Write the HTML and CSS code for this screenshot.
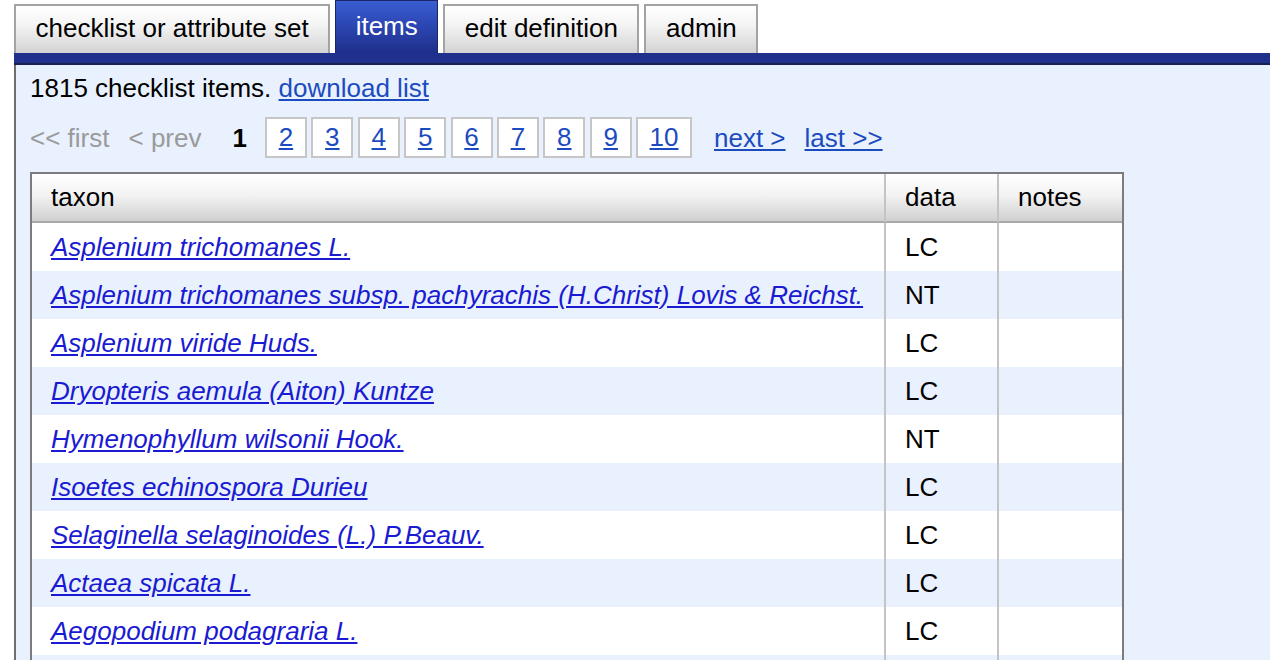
FILE: index.html
```html
<!DOCTYPE html>
<html>
<head>
<meta charset="utf-8">
<link rel="stylesheet" href="styles.css">
</head>
<body>
<div class="tabs">
  <div class="tab">checklist or attribute set</div>
  <div class="tab active">items</div>
  <div class="tab">edit definition</div>
  <div class="tab">admin</div>
</div>
<div class="bar"></div>
<div class="content">
  <div class="summary">1815 checklist items. <a href="#" class="plink">download list</a></div>
  <div class="pager">
    <span class="dis first">&lt;&lt; first</span>
    <span class="dis prev">&lt; prev</span>
    <span class="cur">1</span>
    <a href="#" class="pbox">2</a>
    <a href="#" class="pbox">3</a>
    <a href="#" class="pbox">4</a>
    <a href="#" class="pbox">5</a>
    <a href="#" class="pbox">6</a>
    <a href="#" class="pbox">7</a>
    <a href="#" class="pbox">8</a>
    <a href="#" class="pbox">9</a>
    <a href="#" class="pbox last-box">10</a>
    <a href="#" class="plink next">next &gt;</a>
    <a href="#" class="plink">last &gt;&gt;</a>
  </div>
  <table class="items">
    <thead>
      <tr><th class="c-taxon">taxon</th><th class="c-data">data</th><th class="c-notes">notes</th></tr>
    </thead>
    <tbody>
      <tr><td><a href="#">Asplenium trichomanes L.</a></td><td>LC</td><td></td></tr>
      <tr><td><a href="#">Asplenium trichomanes subsp. pachyrachis (H.Christ) Lovis &amp; Reichst.</a></td><td>NT</td><td></td></tr>
      <tr><td><a href="#">Asplenium viride Huds.</a></td><td>LC</td><td></td></tr>
      <tr><td><a href="#">Dryopteris aemula (Aiton) Kuntze</a></td><td>LC</td><td></td></tr>
      <tr><td><a href="#">Hymenophyllum wilsonii Hook.</a></td><td>NT</td><td></td></tr>
      <tr><td><a href="#">Isoetes echinospora Durieu</a></td><td>LC</td><td></td></tr>
      <tr><td><a href="#">Selaginella selaginoides (L.) P.Beauv.</a></td><td>LC</td><td></td></tr>
      <tr><td><a href="#">Actaea spicata L.</a></td><td>LC</td><td></td></tr>
      <tr><td><a href="#">Aegopodium podagraria L.</a></td><td>LC</td><td></td></tr>
      <tr><td></td><td></td><td></td></tr>
    </tbody>
  </table>
</div>
</body>
</html>
```
FILE: styles.css
```css
html, body {
  margin: 0;
  padding: 0;
  background: #ffffff;
}
body {
  font-family: "Liberation Sans", Arial, Helvetica, sans-serif;
  font-size: 26px;
  color: #000;
  width: 1270px;
  height: 660px;
  overflow: hidden;
}
.tabs {
  display: flex;
  align-items: flex-end;
  gap: 5px;
  padding-left: 14px;
  height: 53px;
}
.tab {
  box-sizing: border-box;
  height: 49px;
  line-height: 45px;
  padding: 0 19.5px;
  border: 2px solid #a3a3a3;
  border-bottom: none;
  background: linear-gradient(#ffffff 0%, #f4f4f4 40%, #d3d3d3 100%);
  white-space: nowrap;
}
.tab.active {
  height: 53px;
  line-height: 51px;
  border: 1px solid #1a2668;
  border-bottom: none;
  padding: 0 19.5px;
  color: #ffffff;
  background: linear-gradient(#3a5dd0 0%, #2c47b4 45%, #1e2f8a 100%);
}
.bar {
  margin-left: 14px;
  height: 10px;
  background: #1f318c;
  border-bottom: 2px solid #17204f;
}
.content {
  margin-left: 14px;
  border-left: 2px solid #6f6f6f;
  background: #e8f1fd;
  padding: 8px 0 0 14px;
  height: 620px;
}
.summary {
  line-height: 30px;
}
a {
  color: #1c4bbf;
}
.pager {
  display: flex;
  align-items: center;
  margin-top: 14px;
  height: 41px;
  line-height: 30px;
}
.dis {
  color: #9a9a9a;
}
.first {
  margin-right: 19px;
}
.prev {
  margin-right: 31px;
}
.cur {
  font-weight: bold;
  margin-right: 18px;
}
.pbox {
  box-sizing: border-box;
  height: 41px;
  line-height: 37px;
  min-width: 42px;
  padding: 0 11.5px;
  text-align: center;
  background: #ffffff;
  border: 2px solid #c6c6c6;
  margin-right: 4.4px;
}
.pbox:first-of-type {
  margin-left: 0;
}
.last-box {
  margin-right: 22px;
}
.next {
  margin-right: 19px;
}
.items {
  margin-top: 14px;
  width: 1094px;
  table-layout: fixed;
  border-collapse: separate;
  border-spacing: 0;
  border: 2px solid #7c7c7c;
  background: #ffffff;
}
.c-taxon { width: 854px; }
.c-data { width: 113px; }
.c-notes { width: auto; }
.items th {
  box-sizing: border-box;
  height: 49px;
  text-align: left;
  font-weight: normal;
  padding: 0 0 0 19px;
  background: linear-gradient(#ffffff 0%, #f3f3f3 45%, #d0d0d0 100%);
  border-bottom: 2px solid #a9a9a9;
  border-right: 2px solid #c4c4c4;
}
.items td {
  box-sizing: border-box;
  height: 48px;
  padding: 0 0 0 19px;
  border-right: 2px solid #c4c4c4;
  white-space: nowrap;
}
.items th:last-child,
.items td:last-child {
  border-right: none;
}
.items tbody tr:nth-child(even) td {
  background: #e8f1fd;
}
.items td a {
  color: #1a1ad2;
  font-style: italic;
}
```
